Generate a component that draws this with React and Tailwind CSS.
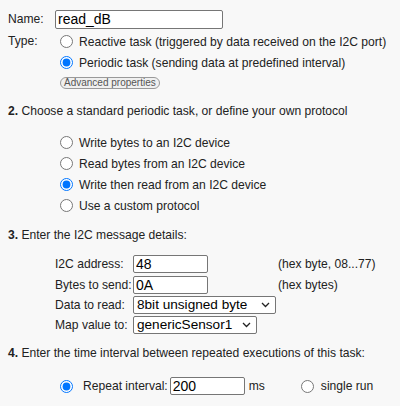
import { useState } from 'react';

function Radio({ checked, onChange, name }) {
  return (
    <input
      type="radio"
      name={name}
      checked={checked}
      onChange={onChange}
      className="w-[13px] h-[13px] shrink-0 accent-[#0075ff]"
    />
  );
}

function Select({ value, options, onChange, width }) {
  return (
    <div className={`relative ${width}`}>
      <select
        value={value}
        onChange={e => onChange(e.target.value)}
        className="appearance-none w-full h-[18px] bg-white border border-[#767676] rounded-[2px] pl-[3px] pr-5 text-[13.6px] leading-[16px] text-black"
      >
        {options.map(o => <option key={o}>{o}</option>)}
      </select>
      <svg className="absolute right-[6px] top-[6px] pointer-events-none" width="9" height="6" viewBox="0 0 9 6">
        <path d="M1 1 L4.5 4.5 L8 1" fill="none" stroke="#222" strokeWidth="1.3" />
      </svg>
    </div>
  );
}

const textInput = 'h-[18px] bg-white border border-[#767676] rounded-[2px] px-[2px] text-[14px] leading-[16px] text-black outline-none';

export default function App() {
  const [name, setName] = useState('read_dB');
  const [type, setType] = useState('periodic');
  const [proto, setProto] = useState('writeread');
  const [addr, setAddr] = useState('48');
  const [bytes, setBytes] = useState('0A');
  const [dataType, setDataType] = useState('8bit unsigned byte');
  const [mapTo, setMapTo] = useState('genericSensor1');
  const [interval, setInterval] = useState('200');
  const [mode, setMode] = useState('repeat');

  const protocols = [
    ['write', 'Write bytes to an I2C device'],
    ['read', 'Read bytes from an I2C device'],
    ['writeread', 'Write then read from an I2C device'],
    ['custom', 'Use a custom protocol'],
  ];

  return (
    <div className="min-h-screen bg-[#f8f8f8] text-[#222] text-[12.1px] leading-[14px] px-2 pt-[9px] font-['Liberation_Sans',Arial,sans-serif]">
      {/* Name */}
      <div className="flex items-center h-[20px]">
        <span className="w-[47px]">Name:</span>
        <input value={name} onChange={e => setName(e.target.value)} className={`${textInput} w-[168px] h-[19px] text-[14.5px]`} />
      </div>

      {/* Type */}
      <div className="flex mt-[2px]">
        <span className="w-[52px] pt-[3px]">Type:</span>
        <div className="flex flex-col">
          <label className="flex items-center gap-[6px] h-[21px]">
            <Radio name="type" checked={type === 'reactive'} onChange={() => setType('reactive')} />
            <span>Reactive task (triggered by data received on the I2C port)</span>
          </label>
          <label className="flex items-center gap-[6px] h-[21px]">
            <Radio name="type" checked={type === 'periodic'} onChange={() => setType('periodic')} />
            <span>Periodic task (sending data at predefined interval)</span>
          </label>
          <div className="mt-[4px] flex h-[12px]">
            <button className="flex items-center h-[12px] px-[3px] rounded-full border border-[#999] bg-[#f0f0f0] text-[#555] text-[10px] leading-[10px]">
              Advanced properties
            </button>
          </div>
        </div>
      </div>

      {/* Section 2 */}
      <p className="mt-[15px]"><b>2.</b> Choose a standard periodic task, or define your own protocol</p>
      <div className="flex flex-col pl-[52px] mt-[14px]">
        {protocols.map(([k, label]) => (
          <label key={k} className="flex items-center gap-[6px] h-[21px]">
            <Radio name="proto" checked={proto === k} onChange={() => setProto(k)} />
            <span>{label}</span>
          </label>
        ))}
      </div>

      {/* Section 3 */}
      <p className="mt-[12px]"><b>3.</b> Enter the I2C message details:</p>
      <div className="flex flex-col pl-[47px] mt-[11px]">
        <div className="flex items-center h-[21px]">
          <span className="w-[78px]">I2C address:</span>
          <input value={addr} onChange={e => setAddr(e.target.value)} className={`${textInput} w-[75px]`} />
          <span className="ml-[70px]">(hex byte, 08...77)</span>
        </div>
        <div className="flex items-center h-[21px]">
          <span className="w-[78px]">Bytes to send:</span>
          <input value={bytes} onChange={e => setBytes(e.target.value)} className={`${textInput} w-[75px]`} />
          <span className="ml-[70px]">(hex bytes)</span>
        </div>
        <div className="flex items-center h-[20px]">
          <span className="w-[78px]">Data to read:</span>
          <Select value={dataType} onChange={setDataType} width="w-[143px]"
            options={['8bit unsigned byte', '8bit signed byte', '16bit unsigned word', '16bit signed word']} />
        </div>
        <div className="flex items-center h-[20px]">
          <span className="w-[78px]">Map value to:</span>
          <Select value={mapTo} onChange={setMapTo} width="w-[124px]"
            options={['genericSensor1', 'genericSensor2', 'genericSensor3']} />
        </div>
      </div>

      {/* Section 4 */}
      <p className="mt-[11px]"><b>4.</b> Enter the time interval between repeated executions of this task:</p>
      <div className="flex items-center pl-[52px] mt-[16px] h-[20px]">
        <Radio name="mode" checked={mode === 'repeat'} onChange={() => setMode('repeat')} />
        <span className="ml-[10px]">Repeat interval:</span>
        <input value={interval} onChange={e => setInterval(e.target.value)} className={`${textInput} w-[75px] ml-[2px]`} />
        <span className="ml-[4px]">ms</span>
        <label className="flex items-center gap-[7px] ml-[36px]">
          <Radio name="mode" checked={mode === 'single'} onChange={() => setMode('single')} />
          <span>single run</span>
        </label>
      </div>
    </div>
  );
}
